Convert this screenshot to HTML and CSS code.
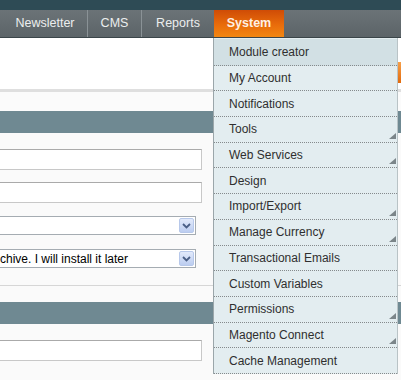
FILE: index.html
```html
<!DOCTYPE html>
<html lang="en">

<head>
  <meta charset="UTF-8">
  <title>System menu</title>
  <link rel="stylesheet" href="styles.css">
</head>

<body>
  <div class="header"></div>
  <div class="nav-bar">
    <ul class="nav">
      <li class="nav-item nav-news">Newsletter</li>
      <li class="nav-item nav-cms">CMS</li>
      <li class="nav-item nav-reports">Reports</li>
      <li class="nav-item nav-active">System
        <ul class="sub">
          <li class="sub-item over">Module creator</li>
          <li class="sub-item">My Account</li>
          <li class="sub-item">Notifications</li>
          <li class="sub-item parent">Tools<i class="arr"></i></li>
          <li class="sub-item parent">Web Services<i class="arr"></i></li>
          <li class="sub-item">Design</li>
          <li class="sub-item parent">Import/Export<i class="arr"></i></li>
          <li class="sub-item parent">Manage Currency<i class="arr"></i></li>
          <li class="sub-item">Transactional Emails</li>
          <li class="sub-item">Custom Variables</li>
          <li class="sub-item parent">Permissions<i class="arr"></i></li>
          <li class="sub-item parent">Magento Connect<i class="arr"></i></li>
          <li class="sub-item">Cache Management</li>
        </ul>
      </li>
    </ul>
  </div>

  <div class="middle">
    <div class="content-header"><span class="btn-save"></span></div>
    <div class="strip"></div>

    <div class="entry-head"></div>
    <div class="fieldset">
      <div class="input-text"></div>
      <div class="input-text row-2"></div>
      <div class="select row-3"><span class="select-val"></span><span class="select-btn"><svg width="9" height="6" viewBox="0 0 9 6"><path d="M1 1 L4.5 4.5 L8 1" fill="none" stroke="#4a5f86" stroke-width="1.8"/></svg></span></div>
      <div class="select row-4"><span class="select-val">chive. I will install it later</span><span class="select-btn"><svg width="9" height="6" viewBox="0 0 9 6"><path d="M1 1 L4.5 4.5 L8 1" fill="none" stroke="#4a5f86" stroke-width="1.8"/></svg></span></div>
    </div>

    <div class="entry-head"></div>
    <div class="fieldset">
      <div class="input-text"></div>
    </div>
  </div>
</body>

</html>
```

FILE: styles.css
```css
body,
ul {
  margin: 0;
  padding: 0;
}

ul {
  list-style: none;
}

body {
  width: 401px;
  height: 380px;
  overflow: hidden;
  background-color: #fafafa;
  font-family: "Liberation Sans", Arial, sans-serif;
  font-size: 12px;
}

/* top bar */
.header {
  height: 10px;
  background-color: #2e4b55;
}

.nav-bar {
  height: 27px;
  background: linear-gradient(#6b7377, #5c6468);
  border-bottom: 1px solid #3a4549;
}

.nav {
  display: flex;
  height: 27px;
}

.nav-item {
  height: 27px;
  line-height: 27px;
  font-size: 12.5px;
  color: #eceeee;
  text-align: center;
  box-sizing: border-box;
}

.nav-news {
  width: 88px;
  padding-left: 3px;
  border-right: 1px solid #8a9296;
}

.nav-cms {
  width: 54px;
  border-right: 1px solid #8a9296;
}

.nav-reports {
  width: 72px;
}

.nav-active {
  width: 70px;
  position: relative;
  font-weight: bold;
  color: #fff1e4;
  background: linear-gradient(#cf4c06, #e96c0b 55%, #f28712);
}

/* dropdown */
.sub {
  position: absolute;
  top: 28px;
  left: -1px;
  z-index: 5;
  width: 185px;
  padding-top: 1px;
  box-sizing: border-box;
  background-color: #e3edf0;
  border-left: 1px solid #9ba6aa;
  border-right: 1px solid #b9c3c6;
  text-align: left;
  font-weight: normal;
}

.sub-item {
  display: flex;
  align-items: center;
  justify-content: space-between;
  height: 24.7px;
  padding: 1px 1px 0 15px;
  box-sizing: content-box;
  border-bottom: 1px dotted #858a8c;
  font-size: 12px;
  line-height: 14px;
  color: #2f2f2f;
}

.sub-item + .sub-item {
  height: 24.7px;
  padding-top: 0;
}

.sub-item.over {
  background-color: #d2e0e4;
}

.arr {
  align-self: flex-end;
  margin-bottom: 3px;
  width: 0;
  height: 0;
  border-left: 7px solid transparent;
  border-bottom: 6px solid #7b8589;
}

/* page */
.content-header {
  height: 51px;
  display: flex;
  justify-content: flex-end;
  align-items: flex-end;
  background-color: #fff;
  border-bottom: 3px solid #dfdfdf;
}

.btn-save {
  width: 20px;
  height: 21px;
  margin-right: -17px;
  margin-bottom: 6px;
  background: linear-gradient(#f6a04a, #e26a0c);
}

.strip {
  height: 19px;
  background-color: #fbfbfb;
}

.entry-head {
  height: 22px;
  background-color: #6f8992;
}

.fieldset {
  padding: 16px 0 17px;
  margin-bottom: 16px;
  background-color: #fafafa;
  border-bottom: 1px solid #d6d6d6;
}

.fieldset:last-child {
  margin-bottom: 0;
  border-bottom: 0;
}

.input-text {
  width: 203px;
  height: 21px;
  margin-left: -1px;
  box-sizing: border-box;
  background-color: #fff;
  border: 1px solid;
  border-color: #aaa #c8c8c8 #c8c8c8 #aaa;
}

.row-2 {
  margin-top: 12px;
}

.row-3 {
  margin-top: 13px;
}

.row-4 {
  margin-top: 14px;
}

.select {
  display: flex;
  align-items: center;
  justify-content: space-between;
  width: 197px;
  height: 19px;
  margin-left: -1px;
  box-sizing: border-box;
  background-color: #fff;
  border: 1px solid #a5acb2;
}

.select-val {
  font-size: 12px;
  color: #000;
}

.select-btn {
  display: flex;
  align-items: center;
  justify-content: center;
  width: 15px;
  height: 15px;
  margin-right: 1px;
  box-sizing: border-box;
  border: 1px solid #b7c8ea;
  border-radius: 2px;
  background: linear-gradient(#e2eafb, #bccdf0);
}
```
